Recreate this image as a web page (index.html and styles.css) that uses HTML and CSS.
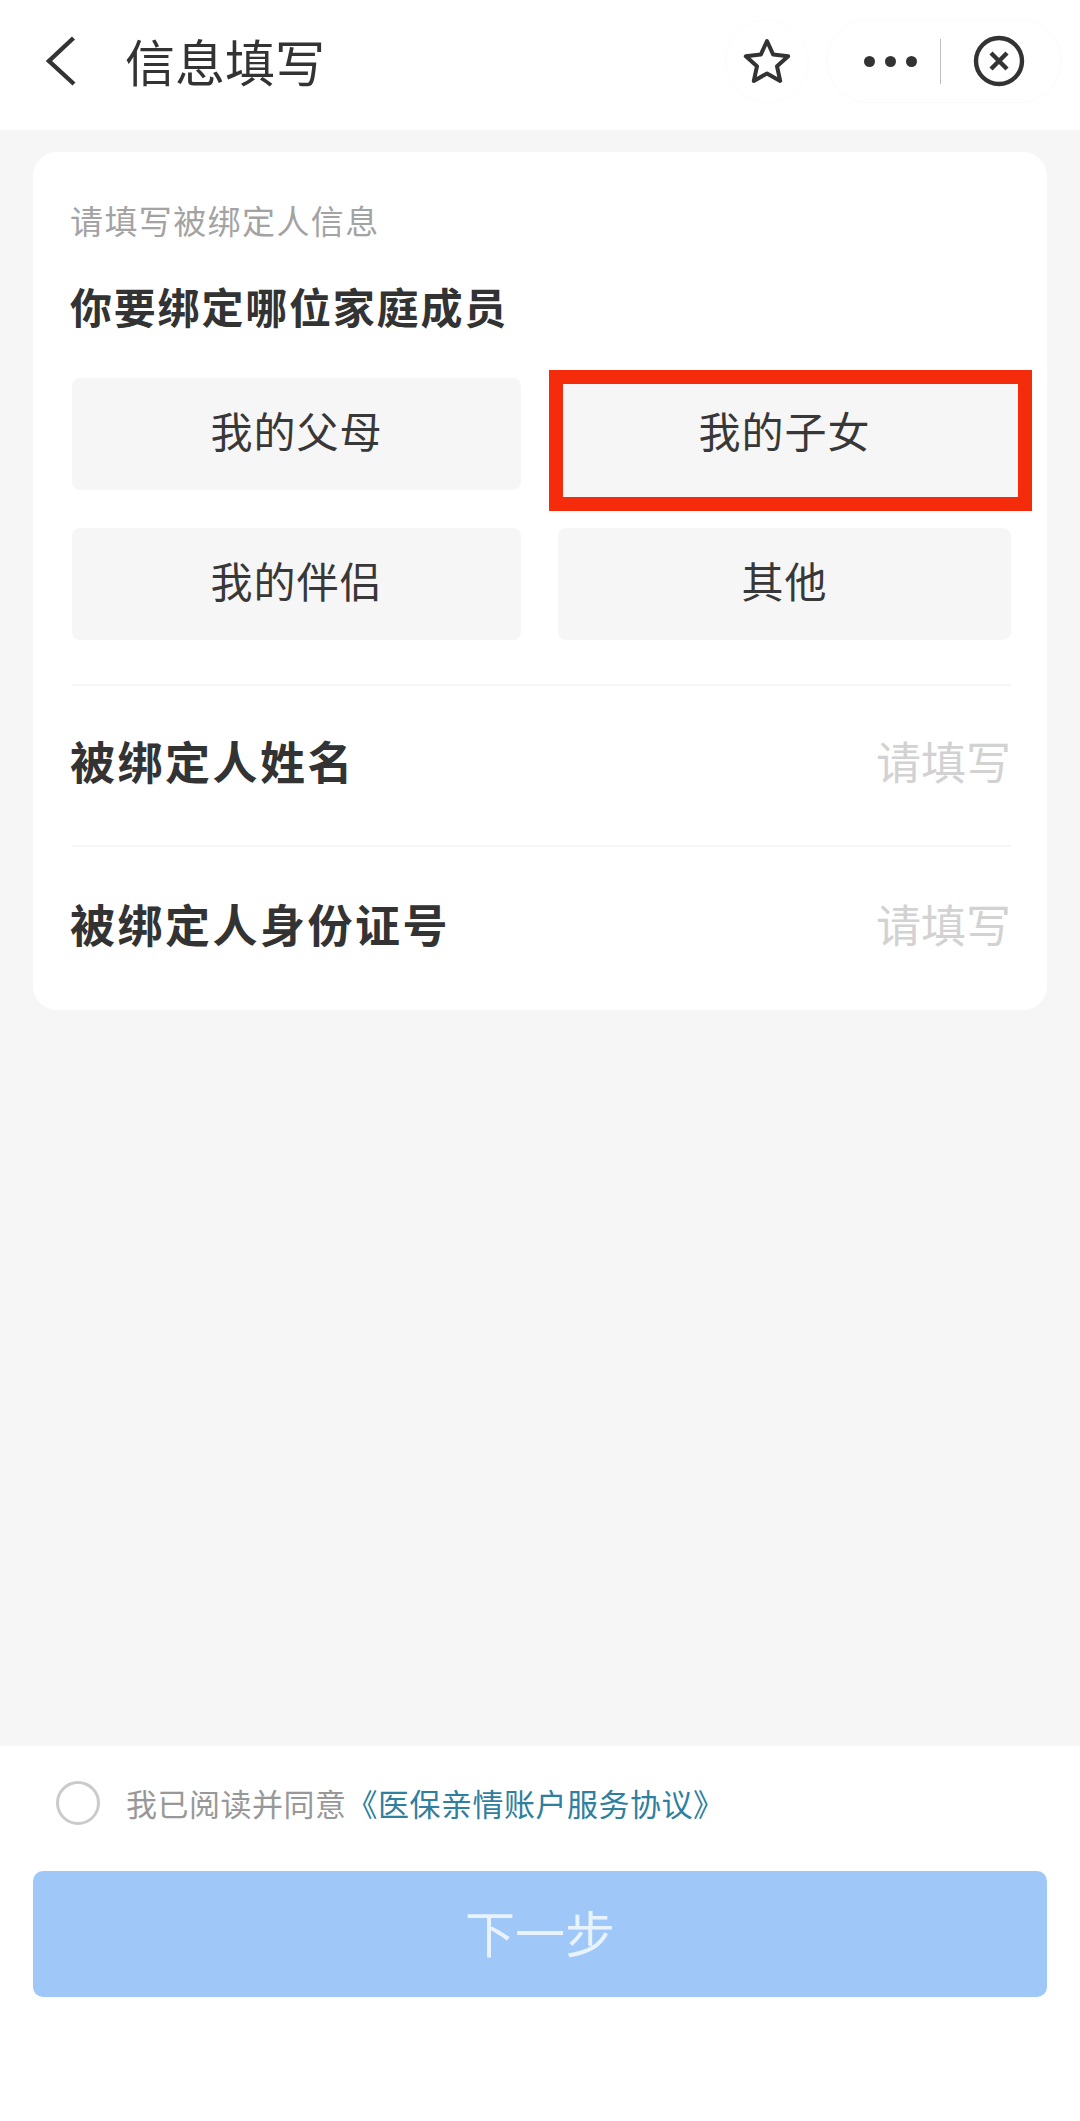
FILE: index.html
```html
<!DOCTYPE html>
<html lang="zh-CN">
<head>
<meta charset="utf-8">
<title>信息填写</title>
<link rel="stylesheet" href="styles.css">
</head>
<body>
<div class="page">
  <header class="topbar">
    <svg class="back" width="30" height="50" viewBox="0 0 30 50" aria-hidden="true"><path d="M27.5 2 3 25l25 23" fill="none" stroke="#333" stroke-width="4.4"/></svg>
    <h1 class="title">信息填写</h1>
    <div class="star-pill">
      <svg width="48" height="48" viewBox="0 0 48 48" aria-hidden="true"><path d="M24 4l6.2 13.6 15 1.7-11.2 10 3.2 14.6L24 36.4l-13.2 7.5L14 29.3 2.800 19.300l15-1.700z" fill="none" stroke="#333" stroke-width="4" stroke-linejoin="round"/></svg>
    </div>
    <div class="capsule">
      <div class="dots"><span class="dot"></span><span class="dot"></span><span class="dot"></span></div>
      <span class="capsule-line"></span>
      <svg width="52" height="52" viewBox="0 0 52 52" aria-hidden="true"><circle cx="26" cy="26" r="23" fill="none" stroke="#333" stroke-width="4.400"/><path d="M18 18l16 16M34 18 18 34" fill="none" stroke="#333" stroke-width="4.400"/></svg>
    </div>
  </header>

  <main class="content">
    <section class="card">
      <p class="hint">请填写被绑定人信息</p>
      <h2 class="question">你要绑定哪位家庭成员</h2>
      <div class="choices">
        <div class="choice">我的父母</div>
        <div class="choice choice-marked"><span class="mark"></span><span class="choice-text">我的子女</span></div>
        <div class="choice">我的伴侣</div>
        <div class="choice">其他</div>
      </div>
      <div class="field field-first">
        <span class="field-label">被绑定人姓名</span>
        <span class="field-value">请填写</span>
      </div>
      <div class="field">
        <span class="field-label">被绑定人身份证号</span>
        <span class="field-value">请填写</span>
      </div>
    </section>
  </main>

  <footer class="footer">
    <div class="agree">
      <span class="radio"></span>
      <span class="agree-text">我已阅读并同意<span class="agree-link">《医保亲情账户服务协议》</span></span>
    </div>
    <div class="next">下一步</div>
  </footer>
</div>
</body>
</html>
```

FILE: styles.css
```css
* { box-sizing: border-box; }
html, body { margin: 0; padding: 0; background: #fff; }
body {
  font-family: "Noto Sans CJK SC", "Noto Sans", sans-serif;
  color: #333;
}
.page {
  width: 1080px;
  height: 2121px;
  display: flex;
  flex-direction: column;
  overflow: hidden;
}

/* top bar */
.topbar {
  height: 130px;
  flex: none;
  background: #fff;
  display: flex;
  align-items: center;
  padding: 0 18px 8px 46px;
}
.back { flex: none; }
.title {
  margin: -2px 0 0 49px;
  font-size: 50px;
  line-height: 64px;
  font-weight: 400;
  color: #333;
  flex: 1;
}
.star-pill {
  width: 84px;
  height: 84px;
  border: 1px solid #fcfcfc;
  border-radius: 50%;
  display: flex;
  align-items: center;
  justify-content: center;
  margin-right: 17px;
}
.capsule {
  width: 236px;
  height: 84px;
  border: 1px solid #fbfbfb;
  border-radius: 42px;
  display: flex;
  align-items: center;
  padding-left: 37px;
}
.dots { display: flex; gap: 10px; }
.dot { width: 11px; height: 11px; border-radius: 50%; background: #333; }
.capsule-line {
  width: 1px;
  height: 45px;
  background: #bdbdbd;
  margin: 0 32px 0 23px;
}

/* main */
.content {
  flex: 1;
  background: #f6f6f6;
  padding: 22px 33px 0;
}
.card {
  background: #fff;
  border-radius: 24px;
  width: 1014px;
  height: 858px;
  padding: 46px 36px 0 37px;
}
.hint {
  margin: 0;
  font-size: 33px;
  line-height: 44px;
  letter-spacing: 1.400px;
  color: #a3a3a3;
}
.question {
  margin: 42px 0 0;
  font-size: 42px;
  line-height: 44px;
  letter-spacing: 1.800px;
  font-weight: 700;
  color: #333;
}
.choices {
  margin: 50px 0 0 2px;
  display: grid;
  grid-template-columns: 449px 453px;
  grid-auto-rows: 112px;
  column-gap: 37px;
  row-gap: 38px;
}
.choice {
  background: #f6f6f6;
  border-radius: 8px;
  display: flex;
  align-items: center;
  justify-content: center;
  font-size: 42px;
  letter-spacing: 1px;
  color: #383838;
  padding-bottom: 10px;
}
.choice-marked { position: relative; }
.choice-text { position: relative; }
.mark {
  position: absolute;
  left: -9px;
  top: -8px;
  right: -21px;
  bottom: -21px;
  border: 14px solid #f42c0c;
  background: #f6f6f6;
}
.field {
  height: 161px;
  margin-left: 2px;
  border-top: 2px solid #f6f6f6;
  display: flex;
  align-items: center;
  justify-content: space-between;
  padding-bottom: 10px;
}
.field + .field { padding-bottom: 6px; }
.field-first { margin-top: 44px; }
.field-label {
  margin-left: -2px;
  font-size: 45px;
  letter-spacing: 2.500px;
  font-weight: 700;
  color: #333;
}
.field-value {
  font-size: 45px;
  color: #d2d2d2;
}

/* footer */
.footer {
  height: 375px;
  flex: none;
  background: #fff;
  padding: 35px 33px 0;
}
.agree {
  display: flex;
  align-items: center;
  padding-left: 23px;
  height: 44px;
}
.radio {
  width: 44px;
  height: 44px;
  flex: none;
  border: 3px solid #cbcbcb;
  border-radius: 50%;
}
.agree-text {
  margin-left: 26px;
  font-size: 31px;
  line-height: 44px;
  color: #989898;
  letter-spacing: 0.500px;
}
.agree-link { color: #2f7f9f; }
.next {
  width: 1014px;
  margin-top: 46px;
  height: 126px;
  border-radius: 10px;
  background: #9fc7f8;
  color: #e9f3fe;
  font-size: 50px;
  display: flex;
  align-items: center;
  justify-content: center;
  padding-bottom: 6px;
}
```
